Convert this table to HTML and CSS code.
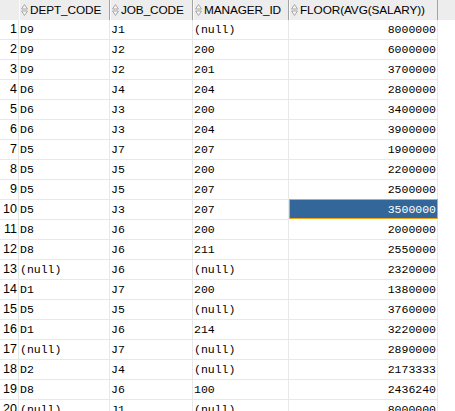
FILE: index.html
```html
<!DOCTYPE html>
<html>
<head>
<meta charset="utf-8">
<link rel="stylesheet" href="styles.css">
</head>
<body>
<div class="grid">
  <div class="row head">
    <div class="num"></div>
    <div class="hcell c1"><svg class="sort" viewBox="0 0 7 12" width="7" height="12"><path d="M3.5 0.5 L6.5 5 L0.5 5 Z M0.5 7 L6.5 7 L3.5 11.5 Z" fill="#f4f4f4" stroke="#a8a8a8" stroke-width="1"/></svg><span>DEPT_CODE</span></div>
    <div class="hcell c2"><svg class="sort" viewBox="0 0 7 12" width="7" height="12"><path d="M3.5 0.5 L6.5 5 L0.5 5 Z M0.5 7 L6.5 7 L3.5 11.5 Z" fill="#f4f4f4" stroke="#a8a8a8" stroke-width="1"/></svg><span>JOB_CODE</span></div>
    <div class="hcell c3"><svg class="sort" viewBox="0 0 7 12" width="7" height="12"><path d="M3.5 0.5 L6.5 5 L0.5 5 Z M0.5 7 L6.5 7 L3.5 11.5 Z" fill="#f4f4f4" stroke="#a8a8a8" stroke-width="1"/></svg><span>MANAGER_ID</span></div>
    <div class="hcell c4"><svg class="sort" viewBox="0 0 7 12" width="7" height="12"><path d="M3.5 0.5 L6.5 5 L0.5 5 Z M0.5 7 L6.5 7 L3.5 11.5 Z" fill="#f4f4f4" stroke="#a8a8a8" stroke-width="1"/></svg><span>FLOOR(AVG(SALARY))</span></div>
    <div class="hfill"></div>
  </div>
  <div class="row"><div class="num">1</div><div class="cell c1">D9</div><div class="cell c2">J1</div><div class="cell c3">(null)</div><div class="cell c4 r">8000000</div><div class="fill"></div></div>
  <div class="row"><div class="num">2</div><div class="cell c1">D9</div><div class="cell c2">J2</div><div class="cell c3">200</div><div class="cell c4 r">6000000</div><div class="fill"></div></div>
  <div class="row"><div class="num">3</div><div class="cell c1">D9</div><div class="cell c2">J2</div><div class="cell c3">201</div><div class="cell c4 r">3700000</div><div class="fill"></div></div>
  <div class="row"><div class="num">4</div><div class="cell c1">D6</div><div class="cell c2">J4</div><div class="cell c3">204</div><div class="cell c4 r">2800000</div><div class="fill"></div></div>
  <div class="row"><div class="num">5</div><div class="cell c1">D6</div><div class="cell c2">J3</div><div class="cell c3">200</div><div class="cell c4 r">3400000</div><div class="fill"></div></div>
  <div class="row"><div class="num">6</div><div class="cell c1">D6</div><div class="cell c2">J3</div><div class="cell c3">204</div><div class="cell c4 r">3900000</div><div class="fill"></div></div>
  <div class="row"><div class="num">7</div><div class="cell c1">D5</div><div class="cell c2">J7</div><div class="cell c3">207</div><div class="cell c4 r">1900000</div><div class="fill"></div></div>
  <div class="row"><div class="num">8</div><div class="cell c1">D5</div><div class="cell c2">J5</div><div class="cell c3">200</div><div class="cell c4 r">2200000</div><div class="fill"></div></div>
  <div class="row"><div class="num">9</div><div class="cell c1">D5</div><div class="cell c2">J5</div><div class="cell c3">207</div><div class="cell c4 r">2500000</div><div class="fill"></div></div>
  <div class="row"><div class="num">10</div><div class="cell c1">D5</div><div class="cell c2">J3</div><div class="cell c3">207</div><div class="cell c4 r sel">3500000</div><div class="fill"></div></div>
  <div class="row"><div class="num">11</div><div class="cell c1">D8</div><div class="cell c2">J6</div><div class="cell c3">200</div><div class="cell c4 r">2000000</div><div class="fill"></div></div>
  <div class="row"><div class="num">12</div><div class="cell c1">D8</div><div class="cell c2">J6</div><div class="cell c3">211</div><div class="cell c4 r">2550000</div><div class="fill"></div></div>
  <div class="row"><div class="num">13</div><div class="cell c1">(null)</div><div class="cell c2">J6</div><div class="cell c3">(null)</div><div class="cell c4 r">2320000</div><div class="fill"></div></div>
  <div class="row"><div class="num">14</div><div class="cell c1">D1</div><div class="cell c2">J7</div><div class="cell c3">200</div><div class="cell c4 r">1380000</div><div class="fill"></div></div>
  <div class="row"><div class="num">15</div><div class="cell c1">D5</div><div class="cell c2">J5</div><div class="cell c3">(null)</div><div class="cell c4 r">3760000</div><div class="fill"></div></div>
  <div class="row"><div class="num">16</div><div class="cell c1">D1</div><div class="cell c2">J6</div><div class="cell c3">214</div><div class="cell c4 r">3220000</div><div class="fill"></div></div>
  <div class="row"><div class="num">17</div><div class="cell c1">(null)</div><div class="cell c2">J7</div><div class="cell c3">(null)</div><div class="cell c4 r">2890000</div><div class="fill"></div></div>
  <div class="row"><div class="num">18</div><div class="cell c1">D2</div><div class="cell c2">J4</div><div class="cell c3">(null)</div><div class="cell c4 r">2173333</div><div class="fill"></div></div>
  <div class="row"><div class="num">19</div><div class="cell c1">D8</div><div class="cell c2">J6</div><div class="cell c3">100</div><div class="cell c4 r">2436240</div><div class="fill"></div></div>
  <div class="row"><div class="num">20</div><div class="cell c1">(null)</div><div class="cell c2">J1</div><div class="cell c3">(null)</div><div class="cell c4 r">8000000</div><div class="fill"></div></div>
</div>
</body>
</html>
```
FILE: styles.css
```css
html, body {
  margin: 0;
  padding: 0;
  background: #ffffff;
  overflow: hidden;
  width: 455px;
  height: 411px;
}
.grid {
  display: flex;
  flex-direction: column;
}
.row {
  display: flex;
  height: 20px;
  flex: none;
}
.num {
  flex: none;
  border-right: 1px solid #e8e8e8;
  border-bottom: 1px solid #e8e8e8;
  box-sizing: border-box;
  width: 19px;
  text-align: right;
  padding-right: 1px;
  font-family: "Liberation Sans", Arial, sans-serif;
  font-size: 12.5px;
  line-height: 19px;
  color: #000;
}
.c1 { width: 91px; }
.c2 { width: 83px; }
.c3 { width: 96px; }
.c4 { width: 149px; }
.cell, .hcell {
  flex: none;
  box-sizing: border-box;
  white-space: nowrap;
  overflow: hidden;
}
.cell {
  border-right: 1px solid #e8e8e8;
  border-bottom: 1px solid #e8e8e8;
  padding-left: 1px;
  font-family: "Liberation Mono", "Courier New", monospace;
  font-size: 11.5px;
  line-height: 19px;
  color: #000;
}
.cell.r {
  text-align: right;
  padding-right: 1px;
}
.cell.sel {
  background: #336699;
  color: #ffffff;
  border: 1px solid #f4a31c;
  line-height: 17px;
  height: 20px;
  margin-top: -1px;
  padding-top: 1px;
}
.fill {
  flex: 1;
}
.head .num {
  background: #ededed;
  border-right: none;
  border-bottom: none;
}
.hcell {
  background: #ededed;
  border-left: 1px solid #fbfbfb;
  border-right: 1px solid #a3a3a3;
  display: flex;
  align-items: center;
  padding-left: 1px;
  font-family: "Liberation Sans", Arial, sans-serif;
  font-size: 11.8px;
  letter-spacing: -0.1px;
  color: #000;
  height: 20px;
}
.sort {
  flex: none;
  margin-right: 2px;
}
.hfill {
  flex: 1;
  background: #ededed;
}
```
